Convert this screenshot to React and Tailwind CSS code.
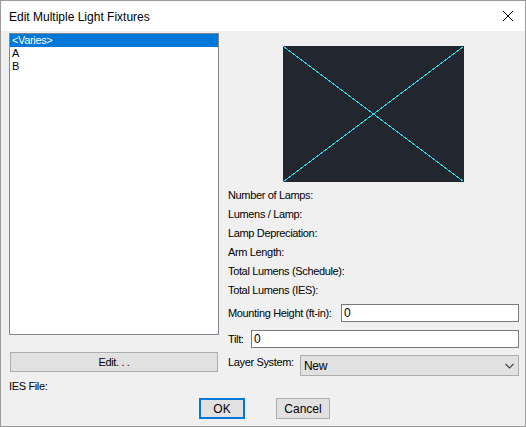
const font = { fontFamily: '"Liberation Sans", Arial, sans-serif' }

function Label({ children }) {
  return <div className="h-[19px] leading-[19px] text-[11px] tracking-[-0.35px] text-black">{children}</div>
}

export default function App() {
  return (
    <div
      className="w-[526px] h-[427px] border border-[#9a9a9a] bg-[#f0f0f0] flex flex-col overflow-hidden"
      style={font}
    >
      {/* Title bar */}
      <div className="h-[30px] bg-white flex items-center justify-between pl-[8px] pr-[10px]">
        <span className="text-[12px] text-black pt-[1px]">Edit Multiple Light Fixtures</span>
        <svg width="12" height="12" viewBox="0 0 12 12" className="mr-[1px]">
          <path d="M1 1L11 11M11 1L1 11" stroke="#000" strokeWidth="1" fill="none" />
        </svg>
      </div>

      {/* Body */}
      <div className="h-[367px] flex flex-row tracking-[-0.35px]">
        {/* Left column */}
        <div className="w-[218px] pl-[8px] flex flex-col">
          <div className="mt-[2px] h-[302px] border border-[#828790] bg-white flex flex-col text-[11px] leading-[13px]">
            <div className="h-[13px] bg-[#0078d7] text-white pl-[2px]">&lt;Varies&gt;</div>
            <div className="h-[13px] text-black pl-[2px]">A</div>
            <div className="h-[13px] text-black pl-[2px]">B</div>
          </div>
          <button className="mt-[17px] ml-[1px] w-[208px] h-[20px] border border-[#adadad] bg-[#e1e1e1] text-[11px] text-black">
            Edit. . .
          </button>
          <div className="mt-[7px] text-[11px] leading-[14px] text-black">IES File:</div>
        </div>

        {/* Right column */}
        <div className="ml-[9px] w-[291px] flex flex-col">
          <div className="mt-[15px] ml-[55px] w-[181px] h-[136px] bg-[#22272f]">
            <svg width="181" height="136" viewBox="0 0 181 136" shapeRendering="crispEdges">
              <line x1="0.5" y1="0.5" x2="180.5" y2="135.5" stroke="#19e3f0" strokeWidth="1" />
              <line x1="180.5" y1="0.5" x2="0.5" y2="135.5" stroke="#19e3f0" strokeWidth="1" />
            </svg>
          </div>
          <div className="mt-[4px] flex flex-col">
            <Label>Number of Lamps:</Label>
            <Label>Lumens / Lamp:</Label>
            <Label>Lamp Depreciation:</Label>
            <Label>Arm Length:</Label>
            <Label>Total Lumens (Schedule):</Label>
            <Label>Total Lumens (IES):</Label>
          </div>
          <div className="mt-[4px] flex flex-row items-center h-[18px] text-[11px]">
            <span className="w-[113px]">Mounting Height (ft-in):</span>
            <div className="flex-1 h-[18px] border border-[#7a7a7a] bg-white pl-[2px] leading-[16px] text-[12px]">0</div>
          </div>
          <div className="mt-[8px] flex flex-row items-center h-[18px] text-[11px]">
            <span className="w-[23px]">Tilt:</span>
            <div className="flex-1 h-[18px] border border-[#7a7a7a] bg-white pl-[2px] leading-[16px] text-[12px]">0</div>
          </div>
          <div className="mt-[7px] flex flex-row items-start text-[11px]">
            <span className="w-[72px] leading-[14px]">Layer System:</span>
            <div className="flex-1 h-[21px] border border-[#adadad] bg-[#e1e1e1] flex flex-row items-center justify-between pl-[3px] pr-[3px] text-[12px]">
              <span className="pt-[1px]">New</span>
              <svg width="9" height="6" viewBox="0 0 9 6" className="mr-[1px]">
                <path d="M0.5 1L4.5 5L8.5 1" stroke="#444" strokeWidth="1.1" fill="none" />
              </svg>
            </div>
          </div>
        </div>
      </div>

      {/* Buttons */}
      <div className="h-[21px] flex flex-row pl-[198px] gap-[31px] text-[12px]">
        <button className="w-[46px] h-[21px] border-2 border-[#0078d7] bg-[#e1e1e1] text-black">OK</button>
        <button className="w-[54px] h-[21px] border border-[#adadad] bg-[#e1e1e1] text-black">Cancel</button>
      </div>
    </div>
  )
}
